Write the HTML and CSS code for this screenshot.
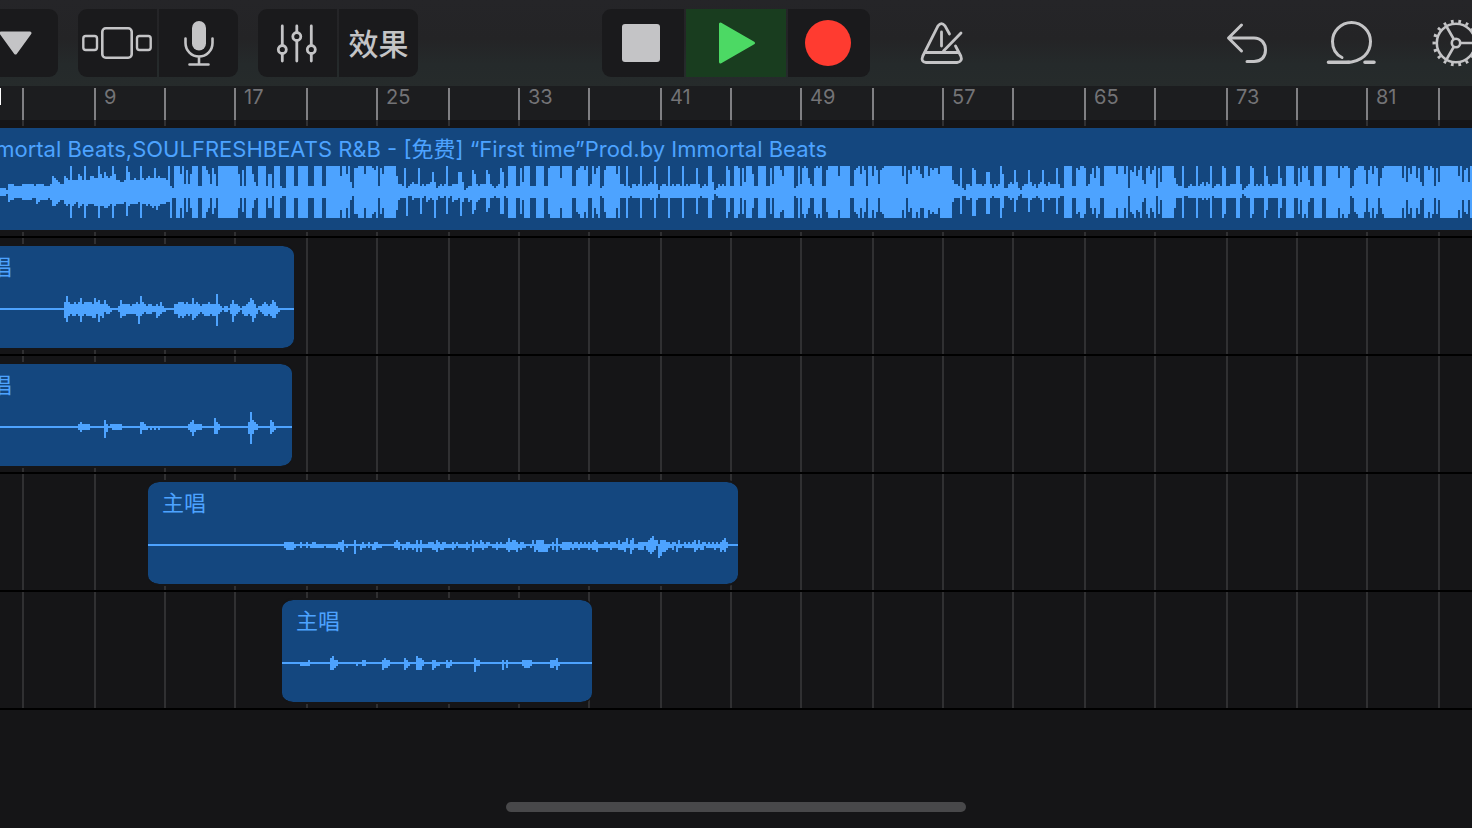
FILE: index.html
```html
<!DOCTYPE html>
<html lang="zh-CN">
<head>
<meta charset="utf-8">
<meta name="viewport" content="width=device-width, initial-scale=1">
<title>音轨</title>
<link rel="stylesheet" href="styles.css">
</head>
<body>
<div class="app">
  <header class="toolbar">
    <div class="toolbar-left">
      <div class="group group-browser">
        <button class="btn" type="button" aria-label="浏览器">
          <svg class="icon" width="60" height="60" viewBox="0 0 60 60"><path d="M13 20H42L27.500 40Z" fill="#c4c4c6" stroke="#c4c4c6" stroke-width="3" stroke-linejoin="round"/></svg>
        </button>
      </div>
      <div class="group">
        <button class="btn" type="button" aria-label="视图">
          <svg class="icon" width="72" height="60" viewBox="0 0 72 60" fill="none" stroke="#c4c4c6"><rect x="20.300" y="15.300" width="29.400" height="29.400" rx="3.500" stroke-width="2.600"/><rect x="1.300" y="23" width="13.700" height="14" rx="2.500" stroke-width="2.400"/><rect x="55" y="23" width="13.700" height="14" rx="2.500" stroke-width="2.400"/></svg>
        </button>
        <button class="btn" type="button" aria-label="麦克风">
          <svg class="icon" width="60" height="60" viewBox="0 0 60 60" fill="none" stroke="#c4c4c6" stroke-width="2.600" stroke-linecap="round"><rect x="23" y="8" width="14" height="29.500" rx="7" fill="#c4c4c6" stroke="none"/><path d="M16.500 25.500V30a13.500 13.500 0 0 0 27 0V25.500M30 44V51M20.500 51.500H39.500"/></svg>
        </button>
      </div>
      <div class="group">
        <button class="btn" type="button" aria-label="音轨控制">
          <svg class="icon" width="60" height="60" viewBox="0 0 60 60" fill="none" stroke="#c4c4c6" stroke-width="2.800" stroke-linecap="round"><path d="M14.300 13V32M14.300 41V48M28.800 13V19M28.800 28V48M43.300 13V32M43.300 41V48"/><circle cx="14.300" cy="36.500" r="4"/><circle cx="28.800" cy="23.500" r="4"/><circle cx="43.300" cy="36.500" r="4"/></svg>
        </button>
        <button class="btn btn-text" type="button">效果</button>
      </div>
    </div>
    <div class="group transport">
      <button class="btn" type="button" aria-label="停止">
        <svg class="icon" width="60" height="60" viewBox="0 0 60 60"><rect x="9" y="11" width="38" height="38" rx="3" fill="#c4c4c6"/></svg>
      </button>
      <button class="btn btn-play" type="button" aria-label="播放">
        <svg class="icon" width="60" height="60" viewBox="0 0 60 60"><path d="M14.500 11V49L47.500 30Z" fill="#4cd964" stroke="#4cd964" stroke-width="3" stroke-linejoin="round"/></svg>
      </button>
      <button class="btn" type="button" aria-label="录音">
        <svg class="icon" width="60" height="60" viewBox="0 0 60 60"><circle cx="29" cy="30" r="23" fill="#ff3b30"/></svg>
      </button>
    </div>
    <div class="toolbar-right">
      <button class="btn-plain" type="button" aria-label="节拍器">
        <svg class="icon" width="60" height="60" viewBox="0 0 60 60" fill="none" stroke="#c4c4c6" stroke-width="2.800" stroke-linecap="round" stroke-linejoin="round"><path d="M37.500 21L33 12.800Q29.500 8.500 26 12.800L10.800 43Q8.500 49 14 49.500H45Q51 48.500 48.800 43L43.500 33M12.500 39.500H47M29.500 19V33M49 20L31.500 38"/></svg>
      </button>
      <div class="toolbar-actions">
        <button class="btn-plain" type="button" aria-label="撤销">
          <svg class="icon" width="60" height="60" viewBox="0 0 60 60" fill="none" stroke="#c4c4c6" stroke-width="3" stroke-linecap="round" stroke-linejoin="round"><path d="M23.500 12L10.500 25L23.500 38M11 25H36C43 25 47.500 30 47.500 37C47.500 44 43 48.500 36 48.500H29"/></svg>
        </button>
        <button class="btn-plain" type="button" aria-label="乐段循环">
          <svg class="icon" width="60" height="60" viewBox="0 0 60 60" fill="none" stroke="#c4c4c6" stroke-width="3" stroke-linecap="round"><path d="M20 44.500C13 41 10.500 35 10.500 28.500A19 19 0 0 1 48.500 28.500C48.500 40 40 49 24 49.500"/><path d="M6.500 49.300H27M43 49.300H52" stroke-width="3.600"/></svg>
        </button>
        <button class="btn-plain" type="button" aria-label="设置">
          <svg class="icon" width="60" height="60" viewBox="0 0 60 60" fill="none" stroke="#c4c4c6"><circle cx="30" cy="30" r="19.200" stroke-width="2.600"/><circle cx="30" cy="30" r="21.800" stroke-width="3.400" pathLength="180" stroke-dasharray="3.600 6.400" stroke-dashoffset="1.800"/><circle cx="30" cy="30" r="4.200" stroke-width="2.600"/><path d="M34.500 30H49M27.700 26L20.500 13.500M27.700 34L20.500 46.500" stroke-width="2.600"/></svg>
        </button>
      </div>
    </div>
  </header>

  <main class="arrange">
    <div class="grid" id="grid"></div>
    <div class="ruler"><span class="playhead"></span></div>
    <div class="lane"><section class="region region-backing">
      <h2 class="region-name">Immortal Beats,SOULFRESHBEATS R&amp;B - [免费] “First time”Prod.by Immortal Beats</h2>
      <svg class="wave wave-backing" id="wave0"></svg>
    </section></div>
    <div class="lane"><section class="region region-vocal1">
      <h2 class="region-name">主唱</h2><svg class="wave" id="wave1"></svg>
    </section></div>
    <div class="lane"><section class="region region-vocal2">
      <h2 class="region-name">主唱</h2><svg class="wave" id="wave2"></svg>
    </section></div>
    <div class="lane"><section class="region region-vocal3">
      <h2 class="region-name">主唱</h2><svg class="wave" id="wave3"></svg>
    </section></div>
    <div class="lane"><section class="region region-vocal4">
      <h2 class="region-name">主唱</h2><svg class="wave" id="wave4"></svg>
    </section></div>
  </main>
  <footer class="home"><div class="home-bar"></div></footer>
</div>
<script src="app.js"></script>
</body>
</html>
```

FILE: styles.css
```css
* { box-sizing: border-box; }
body {
  margin: 0;
  background: #151517;
  font-family: Inter, "Noto Sans CJK SC", sans-serif;
  overflow: hidden;
}
.app {
  display: flex;
  flex-direction: column;
  min-height: 100vh;
  overflow: hidden;
}
.toolbar {
  display: grid;
  grid-template-columns: 1fr auto 1fr;
  align-items: center;
  padding: 9px 0;
  background: linear-gradient(#252528, #242426 45%, #252a2b 75%, #262b2b);
}
.toolbar-left { display: flex; gap: 20px; min-width: 0; }
.toolbar-right {
  display: flex;
  justify-content: space-between;
  min-width: 0;
  padding-left: 42px;
  margin-right: -14px;
}
.toolbar-actions { display: flex; gap: 44px; }
.group {
  display: flex;
  gap: 2px;
  border-radius: 9px;
  overflow: hidden;
}
.group-browser { margin-left: -22px; }
.btn, .btn-plain {
  display: flex;
  align-items: center;
  justify-content: center;
  height: 68px;
  padding: 0;
  border: 0;
  background: #1a1a1c;
  color: #c4c4c6;
  font-family: inherit;
}
.btn { width: 79px; }
.group-browser .btn { width: 80px; }
.btn-plain { width: 60px; background: none; }
.btn-text {
  padding-bottom: 3px;
  font-size: 30px;
  font-weight: 500;
}
.transport .btn { width: 82px; }
.transport .btn-play { width: 100px; background: #193d1f; }
.icon { flex: none; display: block; }

.arrange { position: relative; }
.grid {
  position: absolute;
  inset: 0;
  display: flex;
  overflow: hidden;
  padding-left: 22px;
  background: linear-gradient(#1c1d1f 34px, #151517 34px);
}
.bar {
  flex: none;
  padding-top: 2px;
}
.bar-tick {
  height: 32px;
  border-left: 2px solid #808083;
  padding-left: 8px;
  color: #737376;
  font-size: 20px;
  line-height: 19px;
}
.bar-line {
  height: 100%;
  border-left: 2px solid #303032;
}
.ruler {
  position: relative;
  height: 34px;
  padding-top: 2px;
}
.playhead {
  display: block;
  width: 1px;
  height: 17px;
  background: #ffffff;
}
.lane {
  position: relative;
  height: 118px;
  padding: 6px 0;
  border-bottom: 2px solid #000000;
  overflow: hidden;
}
.region {
  height: 106px;
  border: 2px solid #151517;
  border-width: 2px 0;
  background: #14477f;
  background-clip: padding-box;
  border-radius: 11px;
  color: #4da3ff;
  overflow: hidden;
}
.region-name {
  margin: 0;
  padding: 8px 14px 0;
  font-size: 22px;
  font-weight: 400;
  line-height: 27px;
  white-space: nowrap;
}
.wave {
  display: block;
  width: 100%;
  height: 54px;
  margin-top: 1px;
  fill: #4da3ff;
  shape-rendering: crispEdges;
}
.region-backing { border-radius: 0; margin-left: -44px; }
.wave-backing { margin-top: 3px; padding-left: 44px; }
.region-vocal1 { margin-left: -46px; width: 340px; }
.region-vocal2 { margin-left: -46px; width: 338px; }
.region-vocal3 { margin-left: 148px; width: 590px; }
.region-vocal4 { margin-left: 282px; width: 310px; }

.home {
  flex: 1;
  display: flex;
  align-items: flex-end;
  justify-content: center;
  padding-bottom: 16px;
}
.home-bar {
  width: 460px;
  height: 10px;
  border-radius: 5px;
  background: #48484a;
}
```

FILE: app.js
```js
// Bars: line every 4 measures, a number every 8.
const widths = [72, 70, 70, 72, 70, 72, 70, 70, 72, 70, 70, 72, 70, 70, 72, 70, 72, 70, 70, 72, 72];
const grid = document.getElementById('grid');
widths.forEach((w, i) => {
  const bar = document.createElement('div');
  bar.className = 'bar';
  bar.style.width = w + 'px';
  const label = i % 2 ? String(5 + i * 4) : '';
  bar.innerHTML = `<div class="bar-tick">${label}</div><div class="bar-line"></div>`;
  grid.append(bar);
});

// "column values" pairs: one hex digit per 2px column, from the given column on.
function levels(text, offset = 0, out = []) {
  const parts = text.trim().split(/\s+/);
  for (let i = 0; i < parts.length; i += 2) {
    const start = offset + Number(parts[i]);
    [...parts[i + 1]].forEach((c, k) => { out[start + k] = parseInt(c, 16); });
  }
  return out;
}

const top0 = [];
levels('0 2221444333344444434444333 25 487654487 34 6d66698 41 6d66 45 8877d97a 53 878d966556d 64 a66766d 71 76787 76 7c78777 83 6d32 87 ddd9d4b4 95 9ddd33ddb 104 94c9 108 3dddddddddd 119 93b3ddd953 129 dddd3992ddd 140 322dddd33 149 ddddd333 157 dddd33 163 ddddddd8dd9d52 177 ccddd9dd', 0, top0);
levels('0 dcbd3c9dddddd 13 8443c23454 23 4c343445a523434d3344 43 4aa5123 50 3b9434 56 44b9432 63 34ca23 69 dddd33c5ddd333 83 dddd33cddddd7ddddd 101 33bcddbd34d9cd23b 118 ddddd9d443d324434d 136 343454d413443d 150 343443d343444c 164 42343dd5124343db33ddcd', 185, top0);
levels('0 3c5ddd933dddd33c4 17 dddb8ddddd 27 23d4cdc743cdcd33 43 bddddd8ddddd 55 33bcd9db3dd8db4 70 bcddddddddd8 82 d4b9ddbd97dd8cbcc9 100 dddddd6443c214 114 43cb44434aa4243 129 4d9224 135 54b521344b53 147 4245b43544 157 4c4224 162 dddd33 168 cbddc349c7dc33', 370, top0);
levels('0 3dddddd9ddd9d2bad8bd 20 64cd9bd2c5dddddd 36 7433d223433d 48 345354d234 58 43dc33444dd4123 73 4dc34343d8434 86 44d733dddd43c5 100 dcd633dddd33dddddd 118 7dcddc23bcddd 131 b4bd9dc37cddddddddd 150 7d5c9dd7c53ddbdc3c5 169 ddddddddd8d5bc5d', 551, top0);

// The lower half follows the upper one with its own intro and softer tails.
const soften = [0, 1, 2, 3, 3, 4, 5, 8, 9, 8, 11, 10, 11, 13];
const bottom0 = top0.map(v => soften[v]);
levels('0 2221 4 544333344444336 19 544443 25 477654 31 467 34 6d765 39 876d7666 47 77d77887 55 6d766665c 64 7666 68 65d6676787 78 9766655d33', 0, bottom0);
levels('14 4333c224333b325434d4233 37 2b325443 45 c53354b954', 185, bottom0);
levels('112 2443cc43', 370, bottom0);

const voices = [
  [top0, bottom0],
  [
    levels('32 3632232352333325342242 54 1 59 14222212 67 2326321221121 80 31 87 2233323225232122 103 2322272101102 116 42210112354201 130 1232124310', 23),
    levels('32 46323323632333442634123 54 21 59 1433222 66 2237321222 76 1143211 87 2243432325432123 103 33233821011026 117 32102332364201 130 1233234421', 23),
  ],
  [
    levels('39 121111 52 31 55 111111 70 221 94 1231111 107 421 124 27321 135 32', 23),
    levels('39 121111 52 52 56 11111 70 3111 75 1 77 1 79 1 94 1242111 107 331 124 38311 135 321', 23),
  ],
  [
    levels('68 11111 76 1 79 1 82 11 95 112 103 2 107 1 110 1 113 11 123 121 129 11 134 202 140 1110210110 151 0101 158 01 162 201021011 173 0101 179 1312210110 191 02022220 202 1 204 3001111101101 218 10101210 228 110111 235 20113023001111 249 123422 256 22211011020010101 273 2020110101 282 10101231'),
    levels('68 122221 76 1 79 1 81 1111111 89 11111 94 212301 103 400211010 112 221110 123 1120212112 133 131311 139 11122312 147 211112101111210 162 31111211 172 1121111 179 2322231211 191 1 193 323333310202 204 301222212112111 219 121223111111211 234 12223114211222 249 23432 254 0653321120311 268 111110 273 321220111 282 12113231'),
  ],
  [
    levels('13 1 24 2311 40 11 50 1211 61 21 67 3221 75 11 82 1 84 1 96 211 110 101 120 11111 134 1112'),
    levels('9 11111 24 3321 37 1 40 11 50 3221 61 321 67 3331 75 32110 82 22 84 1 96 411 110 302 120 12221 134 22131'),
  ],
];

voices.forEach(([up, down], n) => {
  let d = '';
  const mid = 26;
  const line = n === 0 ? 0 : 2;
  const count = Math.max(up.length, down.length);
  for (let i = 0; i < count; i++) {
    const u = (up[i] || 0) * 2;
    const l = (down[i] || 0) * 2;
    if (u + l) d += `M${i * 2} ${mid - u}h2v${u + l + line}h-2z`;
  }
  if (line) d += `M0 ${mid}H2000v2H0z`;
  document.getElementById('wave' + n).innerHTML = `<path d="${d}"/>`;
});
```
